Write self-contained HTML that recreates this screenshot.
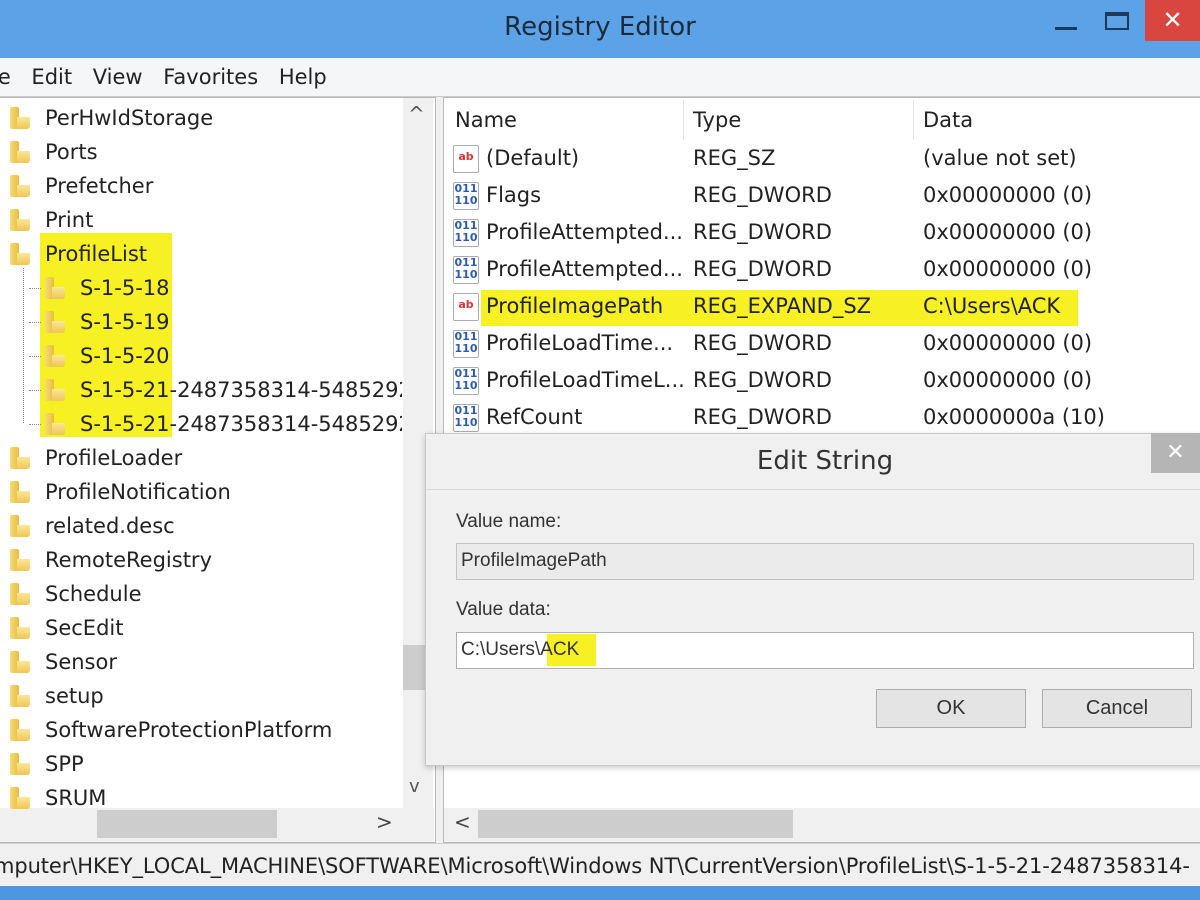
<!DOCTYPE html>
<html><head><meta charset="utf-8"><style>
*{margin:0;padding:0;box-sizing:border-box}
body{width:1200px;height:900px;overflow:hidden;position:relative;background:#f0f0f0;font-family:"DejaVu Sans","Liberation Sans",sans-serif;color:#222}
.a{position:absolute;white-space:nowrap}
.fold{position:absolute;width:22px;height:26px}
.fold:before{content:"";position:absolute;left:2px;top:2px;width:9px;height:22px;background:linear-gradient(90deg,#f7dc7a,#e9bd3c);border-radius:2px}
.fold:after{content:"";position:absolute;left:9px;top:12px;width:13px;height:12px;background:linear-gradient(180deg,#fbe79a,#eec653);border-radius:0 0 3px 1px}
.tr{font-size:21px;line-height:34px;left:45px}
.rw{font-size:21px}
.ic{position:absolute;width:26px;height:28px;border:1px solid #aab;background:#fff;border-radius:2px;font-size:11px;font-weight:bold;line-height:12px;text-align:center}
.h{position:absolute;left:29px;width:12px;border-top:1px dotted #888}
</style></head><body>
<!-- title -->
<div class="a" style="left:0;top:0;width:1200px;height:58px;background:#5ba3e6"></div>
<div class="a" style="left:0;top:12px;width:1200px;text-align:center;font-size:26px;color:#1e2a3a">Registry Editor</div>
<div class="a" style="left:1055px;top:27px;width:22px;height:3px;background:#1e3a5a"></div>
<div class="a" style="left:1105px;top:12px;width:24px;height:18px;border:2px solid #1e3a5a;border-top-width:4px"></div>
<div class="a" style="left:1145px;top:0;width:55px;height:41px;background:#d9463f;color:#fff;font-size:24px;text-align:center;line-height:40px;font-weight:bold">✕</div>
<!-- menu -->
<div class="a" style="left:0;top:58px;width:1200px;height:39px;background:#f5f6f8;border-bottom:1px solid #ccc"></div>
<div class="a" style="left:-8px;top:65px;font-size:21px;word-spacing:14px">le Edit View Favorites Help</div>
<!-- left pane -->
<div class="a" style="left:0;top:97px;width:436px;height:746px;background:#fff;border:1px solid #b8b8b8;border-left:none"></div>
<div class="a" style="left:40px;top:233px;width:132px;height:204px;background:#f7f023"></div>
<div class="a" style="left:403px;top:98px;width:30px;height:710px;background:#f0f0f0"></div>
<div class="a" style="left:403px;top:645px;width:27px;height:45px;background:#cdcdcd"></div>
<div class="a" style="left:408px;top:102px;font-size:20px;color:#555">^</div>
<div class="a" style="left:409px;top:776px;font-size:18px;color:#555">v</div>
<div class="a" style="left:0;top:808px;width:434px;height:34px;background:#f0f0f0"></div>
<div class="a" style="left:97px;top:810px;width:180px;height:28px;background:#cdcdcd"></div>
<div class="a" style="left:376px;top:810px;font-size:20px;color:#444">&gt;</div>
<div class="a" style="left:23px;top:268px;width:1px;height:155px;border-left:1px dotted #888"></div>
<div class="h" style="top:288px"></div><div class="h" style="top:322px"></div><div class="h" style="top:356px"></div><div class="h" style="top:390px"></div><div class="h" style="top:424px"></div>
<div class="fold" style="left:8px;top:105px"></div><div class="a tr" style="top:101px">PerHwIdStorage</div>
<div class="fold" style="left:8px;top:139px"></div><div class="a tr" style="top:135px">Ports</div>
<div class="fold" style="left:8px;top:173px"></div><div class="a tr" style="top:169px">Prefetcher</div>
<div class="fold" style="left:8px;top:207px"></div><div class="a tr" style="top:203px">Print</div>
<div class="fold" style="left:8px;top:241px"></div><div class="a tr" style="top:237px">ProfileList</div>
<div class="fold" style="left:43px;top:275px"></div><div class="a tr" style="top:271px;left:80px">S-1-5-18</div>
<div class="fold" style="left:43px;top:309px"></div><div class="a tr" style="top:305px;left:80px">S-1-5-19</div>
<div class="fold" style="left:43px;top:343px"></div><div class="a tr" style="top:339px;left:80px">S-1-5-20</div>
<div class="fold" style="left:43px;top:377px"></div><div class="a tr" style="top:373px;left:80px;width:322px;overflow:hidden">S-1-5-21-2487358314-5485292</div>
<div class="fold" style="left:43px;top:411px"></div><div class="a tr" style="top:407px;left:80px;width:322px;overflow:hidden">S-1-5-21-2487358314-5485292</div>
<div class="fold" style="left:8px;top:445px"></div><div class="a tr" style="top:441px">ProfileLoader</div>
<div class="fold" style="left:8px;top:479px"></div><div class="a tr" style="top:475px">ProfileNotification</div>
<div class="fold" style="left:8px;top:513px"></div><div class="a tr" style="top:509px">related.desc</div>
<div class="fold" style="left:8px;top:547px"></div><div class="a tr" style="top:543px">RemoteRegistry</div>
<div class="fold" style="left:8px;top:581px"></div><div class="a tr" style="top:577px">Schedule</div>
<div class="fold" style="left:8px;top:615px"></div><div class="a tr" style="top:611px">SecEdit</div>
<div class="fold" style="left:8px;top:649px"></div><div class="a tr" style="top:645px">Sensor</div>
<div class="fold" style="left:8px;top:683px"></div><div class="a tr" style="top:679px">setup</div>
<div class="fold" style="left:8px;top:717px"></div><div class="a tr" style="top:713px">SoftwareProtectionPlatform</div>
<div class="fold" style="left:8px;top:751px"></div><div class="a tr" style="top:747px">SPP</div>
<div class="fold" style="left:8px;top:785px"></div><div class="a tr" style="top:781px">SRUM</div>
<!-- right pane -->
<div class="a" style="left:443px;top:97px;width:757px;height:746px;background:#fff;border:1px solid #b8b8b8;border-right:none"></div>
<div class="a" style="left:683px;top:100px;width:1px;height:40px;background:#e5e5e5"></div>
<div class="a" style="left:913px;top:100px;width:1px;height:40px;background:#e5e5e5"></div>
<div class="a rw" style="left:455px;top:108px">Name</div>
<div class="a rw" style="left:693px;top:108px">Type</div>
<div class="a rw" style="left:923px;top:108px">Data</div>
<div class="a" style="left:481px;top:290px;width:597px;height:36px;background:#f7f023"></div>
<div class="ic" style="left:453px;top:145px;color:#d33;line-height:22px">ab</div><div class="a rw" style="left:486px;top:146px">(Default)</div><div class="a rw" style="left:693px;top:146px">REG_SZ</div><div class="a rw" style="left:923px;top:146px">(value not set)</div>
<div class="ic" style="left:453px;top:182px;color:#2a5ab8">011<br>110</div><div class="a rw" style="left:486px;top:183px">Flags</div><div class="a rw" style="left:693px;top:183px">REG_DWORD</div><div class="a rw" style="left:923px;top:183px">0x00000000 (0)</div>
<div class="ic" style="left:453px;top:219px;color:#2a5ab8">011<br>110</div><div class="a rw" style="left:486px;top:220px">ProfileAttempted...</div><div class="a rw" style="left:693px;top:220px">REG_DWORD</div><div class="a rw" style="left:923px;top:220px">0x00000000 (0)</div>
<div class="ic" style="left:453px;top:256px;color:#2a5ab8">011<br>110</div><div class="a rw" style="left:486px;top:257px">ProfileAttempted...</div><div class="a rw" style="left:693px;top:257px">REG_DWORD</div><div class="a rw" style="left:923px;top:257px">0x00000000 (0)</div>
<div class="ic" style="left:453px;top:293px;color:#d33;line-height:22px">ab</div><div class="a rw" style="left:486px;top:294px">ProfileImagePath</div><div class="a rw" style="left:693px;top:294px">REG_EXPAND_SZ</div><div class="a rw" style="left:923px;top:294px">C:\Users\ACK</div>
<div class="ic" style="left:453px;top:330px;color:#2a5ab8">011<br>110</div><div class="a rw" style="left:486px;top:331px">ProfileLoadTime...</div><div class="a rw" style="left:693px;top:331px">REG_DWORD</div><div class="a rw" style="left:923px;top:331px">0x00000000 (0)</div>
<div class="ic" style="left:453px;top:367px;color:#2a5ab8">011<br>110</div><div class="a rw" style="left:486px;top:368px">ProfileLoadTimeL...</div><div class="a rw" style="left:693px;top:368px">REG_DWORD</div><div class="a rw" style="left:923px;top:368px">0x00000000 (0)</div>
<div class="ic" style="left:453px;top:404px;color:#2a5ab8">011<br>110</div><div class="a rw" style="left:486px;top:405px">RefCount</div><div class="a rw" style="left:693px;top:405px">REG_DWORD</div><div class="a rw" style="left:923px;top:405px">0x0000000a (10)</div>
<div class="a" style="left:444px;top:808px;width:756px;height:34px;background:#f0f0f0"></div>
<div class="a" style="left:478px;top:810px;width:315px;height:28px;background:#cdcdcd"></div>
<div class="a" style="left:454px;top:810px;font-size:20px;color:#444">&lt;</div>
<!-- dialog -->
<div class="a" style="left:425px;top:433px;width:780px;height:333px;background:#f0f0f0;border:1px solid #c8c8c8;box-shadow:0 2px 6px rgba(0,0,0,.2)"></div>
<div class="a" style="left:426px;top:489px;width:774px;height:1px;background:#d8d8d8"></div>
<div class="a" style="left:425px;top:446px;width:800px;text-align:center;font-size:26px;color:#333">Edit String</div>
<div class="a" style="left:1151px;top:433px;width:49px;height:40px;background:#b5b5b5;color:#fff;text-align:center;font-size:22px;line-height:40px">✕</div>
<div class="a" style="left:456px;top:511px;font-family:'Liberation Sans',sans-serif;font-size:19px;color:#333">Value name:</div>
<div class="a" style="left:456px;top:543px;width:738px;height:37px;background:#ebebeb;border:1px solid #c4c4c4"></div>
<div class="a" style="left:461px;top:550px;font-family:'Liberation Sans',sans-serif;font-size:19px;color:#333">ProfileImagePath</div>
<div class="a" style="left:456px;top:599px;font-family:'Liberation Sans',sans-serif;font-size:19px;color:#333">Value data:</div>
<div class="a" style="left:456px;top:632px;width:738px;height:37px;background:#fff;border:1px solid #b0b0b0"></div>
<div class="a" style="left:547px;top:634px;width:49px;height:32px;background:#f7f023"></div>
<div class="a" style="left:461px;top:639px;font-family:'Liberation Sans',sans-serif;font-size:19px;color:#333">C:\Users\ACK</div>
<div class="a" style="left:876px;top:689px;width:150px;height:39px;background:#e4e4e4;border:1px solid #adadad;text-align:center;line-height:37px;font-family:'Liberation Sans',sans-serif;font-size:20px;color:#333">OK</div>
<div class="a" style="left:1042px;top:689px;width:150px;height:39px;background:#e4e4e4;border:1px solid #adadad;text-align:center;line-height:37px;font-family:'Liberation Sans',sans-serif;font-size:20px;color:#333">Cancel</div>
<!-- status -->
<div class="a" style="left:0;top:843px;width:1200px;height:43px;background:#f0f0f0;border-top:1px solid #d0d0d0"></div>
<div class="a" style="left:-6px;top:854px;font-size:21px;letter-spacing:-0.1px">mputer\HKEY_LOCAL_MACHINE\SOFTWARE\Microsoft\Windows NT\CurrentVersion\ProfileList\S-1-5-21-2487358314-</div>
<div class="a" style="left:0;top:886px;width:1200px;height:14px;background:#4d97de"></div>
</body></html>
